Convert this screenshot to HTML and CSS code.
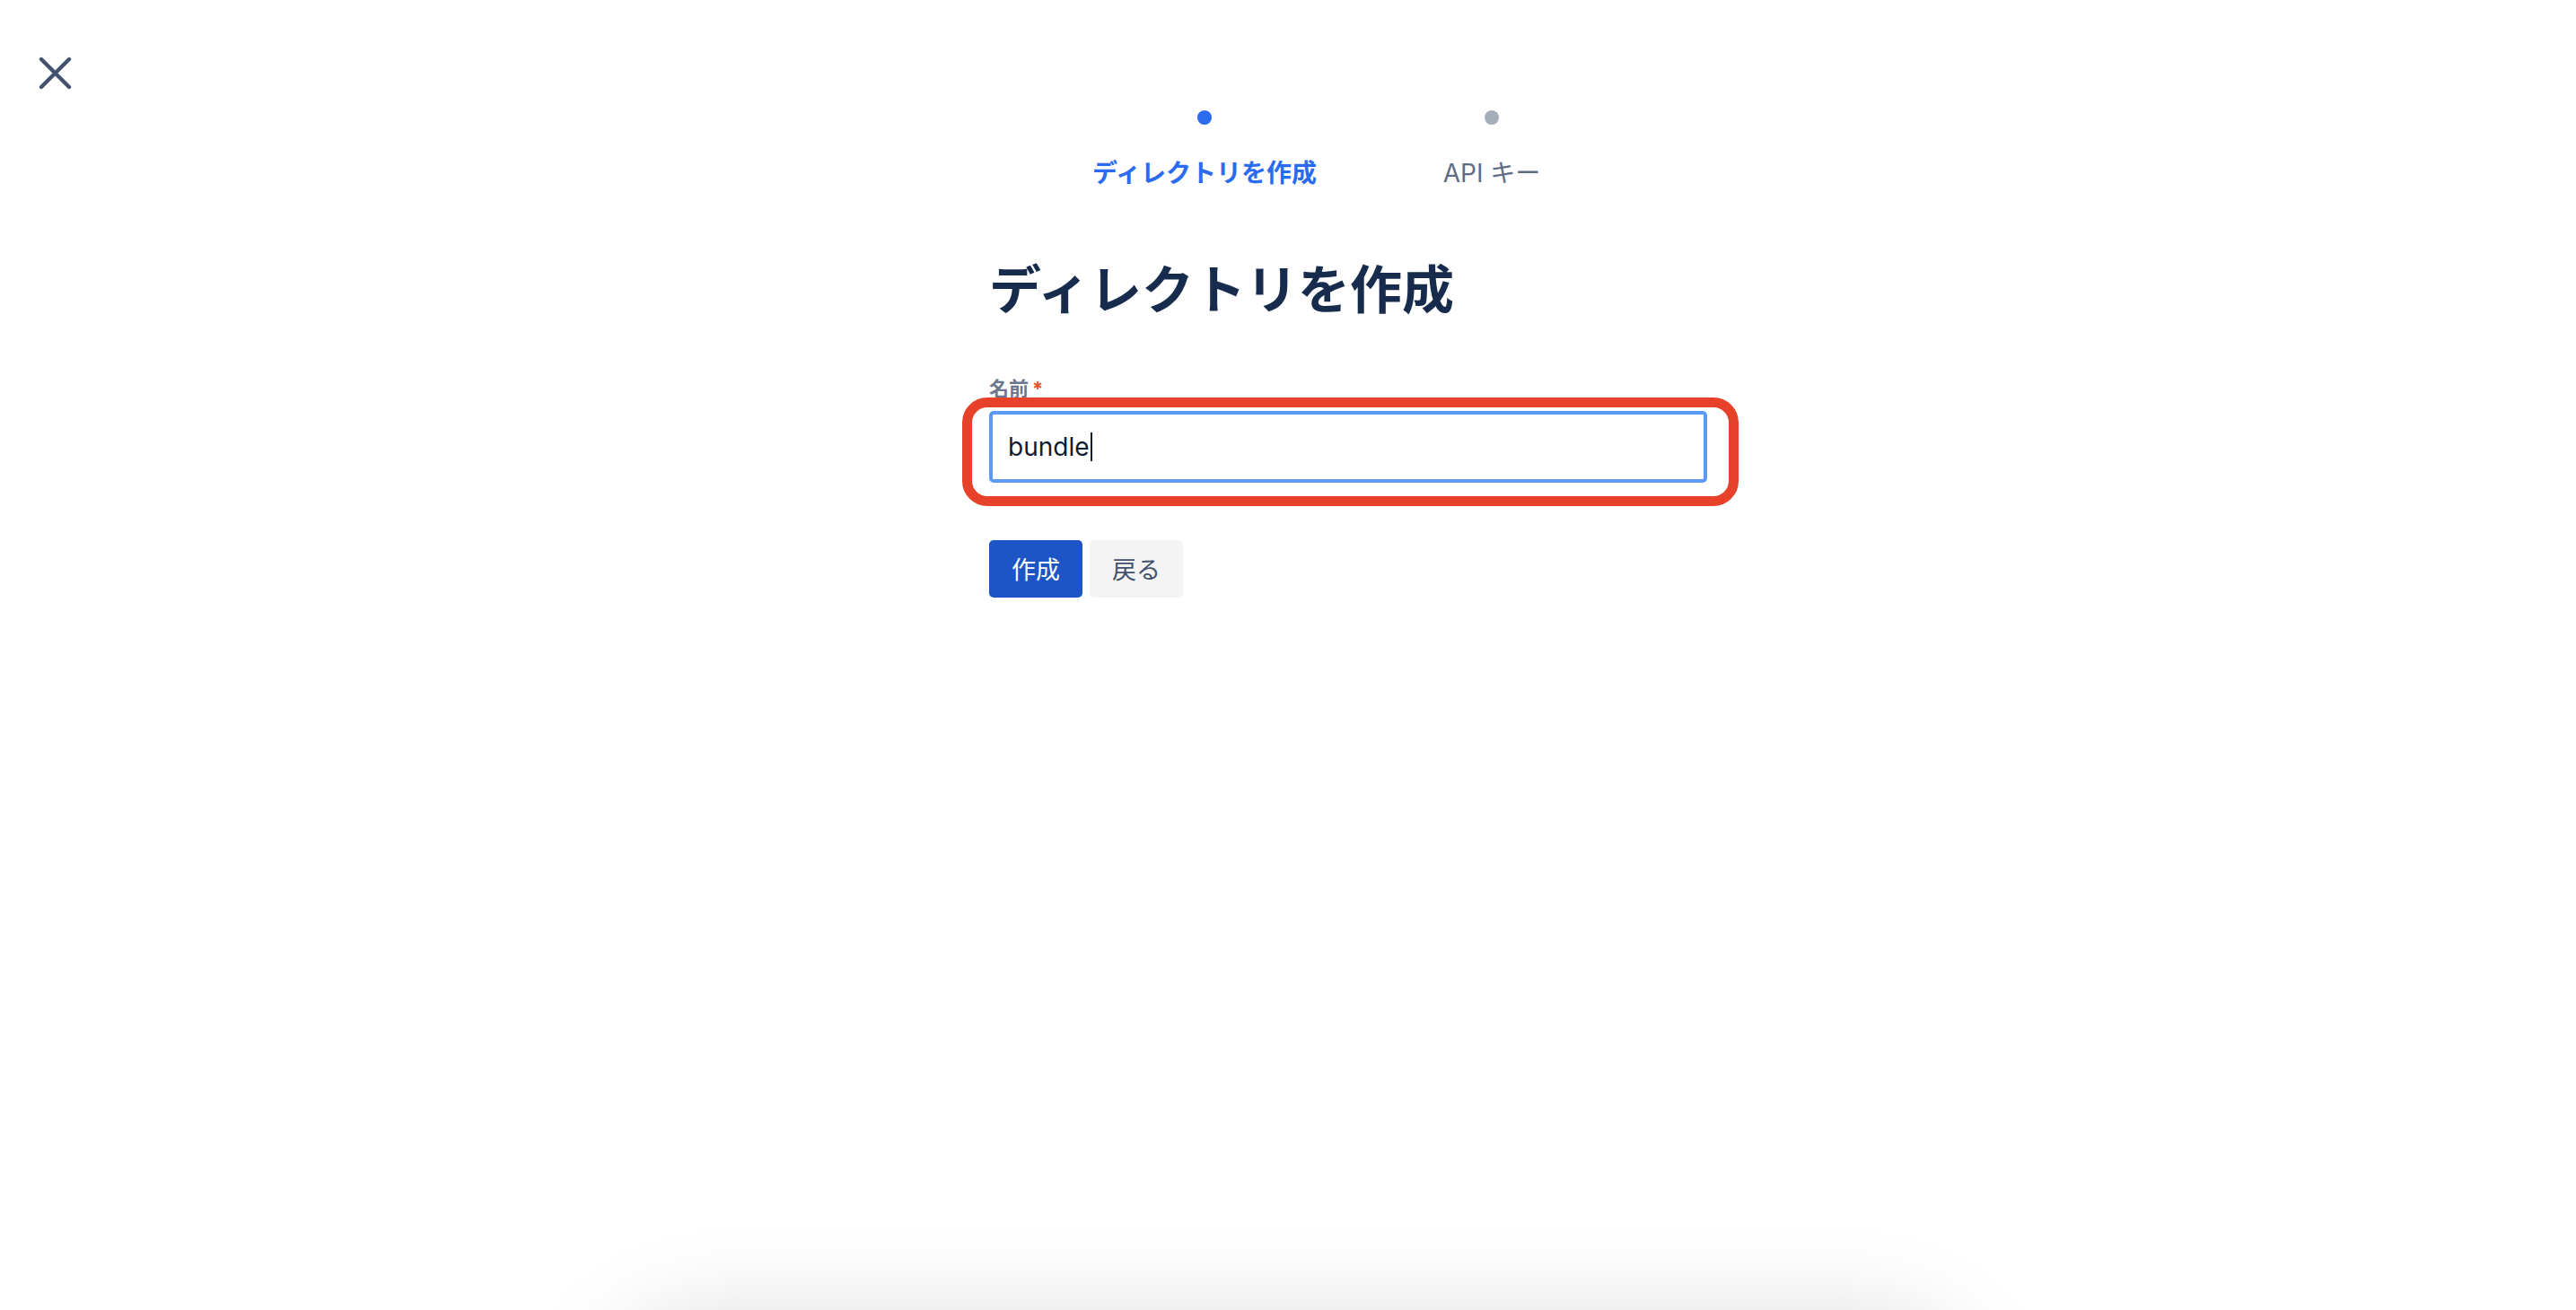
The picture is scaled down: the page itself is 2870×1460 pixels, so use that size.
FILE: index.html
```html
<!DOCTYPE html>
<html lang="ja">
<head>
<meta charset="utf-8">
<title>ディレクトリを作成</title>
<link rel="stylesheet" href="styles.css">
</head>
<body>
<button class="close-btn" aria-label="閉じる">
  <svg width="37" height="37" viewBox="0 0 37 37" fill="none">
    <path d="M3 3 L34 34 M34 3 L3 34" stroke="#42526E" stroke-width="4.4" stroke-linecap="round"/>
  </svg>
</button>

<main class="main">
  <ol class="stepper">
    <li class="step step-active">
      <span class="step-dot"></span>
      <span class="step-label">ディレクトリを作成</span>
    </li>
    <li class="step">
      <span class="step-dot"></span>
      <span class="step-label">API キー</span>
    </li>
  </ol>

  <h1 class="title">ディレクトリを作成</h1>

  <form class="form">
    <label class="field-label">名前<span class="required">*</span></label>
    <div class="field">
      <div class="input"><span class="input-text">bundle</span><span class="caret"></span></div>
      <div class="highlight"></div>
    </div>
    <div class="actions">
      <button type="button" class="btn btn-primary">作成</button>
      <button type="button" class="btn btn-subtle">戻る</button>
    </div>
  </form>
</main>

<div class="shadow-wrap"><div class="bottom-shadow"></div></div>
</body>
</html>
```

FILE: styles.css
```css
html, body {
  margin: 0;
  padding: 0;
  height: 1460px;
  overflow: hidden;
  background: #ffffff;
}

body {
  position: relative;
  font-family: "Inter", "Noto Sans CJK JP", sans-serif;
  color: #172B4D;
  -webkit-font-smoothing: antialiased;
}

.close-btn {
  position: absolute;
  left: 43px;
  top: 63px;
  width: 37px;
  height: 37px;
  padding: 0;
  border: 0;
  background: transparent;
  display: block;
}

.close-btn svg {
  display: block;
}

.main {
  width: 800px;
  margin-left: calc(50% - 333px);
  padding-top: 123px;
}

.stepper {
  list-style: none;
  margin: 0;
  padding: 0;
  display: flex;
  justify-content: center;
}

.step {
  width: 320px;
  display: flex;
  flex-direction: column;
  align-items: center;
  gap: 34px;
}

.step-dot {
  width: 16px;
  height: 16px;
  border-radius: 50%;
  background: #A5ADBA;
}

.step-label {
  font-size: 28px;
  line-height: 40px;
  color: #5E6C84;
  white-space: nowrap;
}

.step-active .step-dot {
  background: #2A6BEF;
}

.step-active .step-label {
  color: #2A6BEF;
  font-weight: 700;
}

.title {
  margin: 76px 0 0;
  font-size: 58px;
  line-height: 68px;
  font-weight: 700;
  color: #172B4D;
  letter-spacing: 0;
}

.form {
  margin-top: 61px;
  display: flex;
  flex-direction: column;
}

.field-label {
  font-size: 22px;
  line-height: 30px;
  font-weight: 700;
  color: #6B778C;
}

.required {
  color: #E5532C;
  margin-left: 4px;
}

.field {
  position: relative;
  margin-top: 10px;
}

.input {
  height: 80px;
  box-sizing: border-box;
  border: 4px solid #5C9BF5;
  border-radius: 5px;
  padding: 0 17px;
  display: flex;
  align-items: center;
  font-size: 28px;
  color: #0F1B33;
  background: #ffffff;
}

.caret {
  display: inline-block;
  width: 2px;
  height: 32px;
  background: #0F1B33;
  margin-left: 1px;
}

.highlight {
  position: absolute;
  left: -30px;
  top: -15px;
  right: -35px;
  bottom: -26px;
  border: 11px solid #E8412A;
  border-radius: 28px;
  pointer-events: none;
}

.actions {
  margin-top: 64px;
  display: flex;
  gap: 8px;
}

.btn {
  height: 64px;
  padding: 0 25px;
  border: 0;
  border-radius: 5px;
  font-family: "Noto Sans CJK JP", sans-serif;
  font-size: 27px;
  line-height: 64px;
}

.btn-primary {
  background: #1D55C6;
  color: #ffffff;
}

.btn-subtle {
  background: #F4F4F4;
  color: #42526E;
}

.shadow-wrap {
  position: absolute;
  left: 0;
  right: 0;
  bottom: 0;
  height: 160px;
  overflow: hidden;
}

.bottom-shadow {
  position: absolute;
  left: 690px;
  right: 690px;
  top: 190px;
  height: 200px;
  border-radius: 100px;
  box-shadow: 0 0 110px 20px rgba(0, 0, 0, 0.15);
}
```
